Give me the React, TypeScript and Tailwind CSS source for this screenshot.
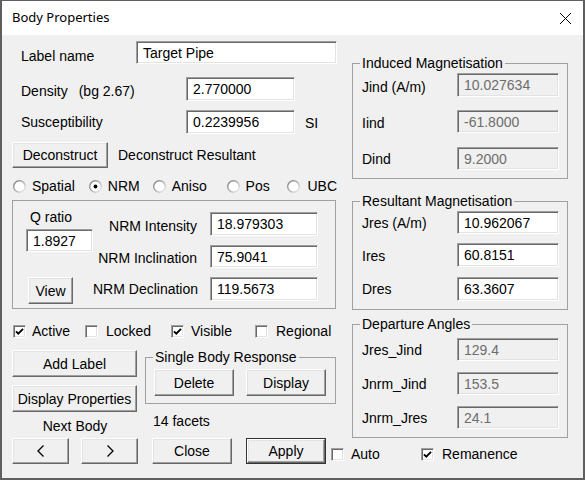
import React from "react"

const raised =
  "bg-[#f0f0f0] border border-t-white border-l-white border-r-[#696969] border-b-[#696969] shadow-[inset_-1px_-1px_0_#a0a0a0,inset_1px_1px_0_#e3e3e3]"

const sunken =
  "border border-t-[#a0a0a0] border-l-[#a0a0a0] border-r-white border-b-white shadow-[inset_1px_1px_0_#696969,inset_-1px_-1px_0_#e3e3e3]"

function Btn({ className = "", children }: { className?: string; children: React.ReactNode }) {
  return (
    <div className={`flex items-center justify-center shrink-0 leading-4 ${raised} ${className}`}>
      {children}
    </div>
  )
}

function Edit({
  className = "",
  value,
  disabled,
}: {
  className?: string
  value: string
  disabled?: boolean
}) {
  return (
    <div
      className={`flex items-center pl-[6px] shrink-0 leading-4 ${sunken} ${
        disabled ? "bg-[#f0f0f0] text-[#6d6d6d]" : "bg-white text-black"
      } ${className}`}
    >
      {value}
    </div>
  )
}

function Radio({ checked }: { checked?: boolean }) {
  return (
    <svg width="13" height="13" viewBox="0 0 13 13" className="shrink-0">
      <defs>
        <linearGradient id="rg" x1="0" y1="0" x2="1" y2="1">
          <stop offset="0" stopColor="#7a7a7a" />
          <stop offset="0.5" stopColor="#b0b0b0" />
          <stop offset="1" stopColor="#f4f4f4" />
        </linearGradient>
      </defs>
      <circle cx="6.5" cy="6.5" r="5.8" fill="#ffffff" stroke="url(#rg)" strokeWidth="1.4" />
      {checked && <circle cx="6.5" cy="6.5" r="1.9" fill="#000" />}
    </svg>
  )
}

function Check({ checked }: { checked?: boolean }) {
  return (
    <div className={`w-[13px] h-[13px] bg-white shrink-0 flex items-center justify-center ${sunken}`}>
      {checked && (
        <svg width="9" height="9" viewBox="0 0 9 9">
          <polyline points="1,4.3 3.3,6.7 8,1.8" fill="none" stroke="#000" strokeWidth="1.9" />
        </svg>
      )}
    </div>
  )
}

function Chevron({ right }: { right?: boolean }) {
  return (
    <svg width="8" height="12" viewBox="0 0 8 12">
      <polyline
        points={right ? "1.5,0.5 7,6 1.5,11.5" : "6.5,0.5 1,6 6.5,11.5"}
        fill="none"
        stroke="#000"
        strokeWidth="1.3"
      />
    </svg>
  )
}

function Group({
  title,
  className = "",
  children,
}: {
  title: string
  className?: string
  children: React.ReactNode
}) {
  return (
    <fieldset className={`border border-[#a0a0a0] shrink-0 ${className}`}>
      <legend className="ml-[7px] px-[2px] leading-4">{title}</legend>
      {children}
    </fieldset>
  )
}

function Row({
  label,
  value,
  rowTop,
  labelTop,
  h,
  disabled,
}: {
  label: string
  value: string
  rowTop: string
  labelTop: string
  h: string
  disabled?: boolean
}) {
  return (
    <div className={`flex ${rowTop}`}>
      <span className={`ml-[9px] w-[95px] leading-4 ${labelTop}`}>{label}</span>
      <Edit className={`w-[102px] ${h}`} value={value} disabled={disabled} />
    </div>
  )
}

export default function App() {
  return (
    <div className="w-[585px] h-[480px] bg-[#f0f0f0] border-x-2 border-b-2 border-t border-[#5f5f5f] flex flex-col text-[14px] text-black font-['Liberation_Sans',Arial,sans-serif]">
      {/* Title bar */}
      <div className="h-[34px] shrink-0 bg-white flex items-center justify-between pl-[10px] pr-[11px]">
        <span className="font-['Noto_Sans',sans-serif] text-[13px]">Body Properties</span>
        <svg width="13" height="13" viewBox="0 0 13 13">
          <path d="M1 1 L12 12 M12 1 L1 12" stroke="#000" strokeWidth="1" />
        </svg>
      </div>

      <div className="flex-1 pl-[10px] flex flex-col">
        <div className="h-[403px] flex">
          {/* Left column */}
          <div className="w-[325px] flex flex-col">
            <div className="flex mt-[6px]">
              <span className="ml-[9px] w-[115px] mt-[7px] leading-4">Label name</span>
              <Edit className="w-[201px] h-[23px]" value="Target Pipe" />
            </div>
            <div className="flex mt-[13px]">
              <span className="ml-[9px] w-[165px] mt-[6px] leading-4">
                Density<span className="ml-[11px]">(bg 2.67)</span>
              </span>
              <Edit className="w-[109px] h-[24px]" value="2.770000" />
            </div>
            <div className="flex mt-[9px]">
              <span className="ml-[9px] w-[165px] mt-[4px] leading-4">Susceptibility</span>
              <Edit className="w-[109px] h-[24px]" value="0.2239956" />
              <span className="ml-[10px] mt-[5px] leading-4">SI</span>
            </div>
            <div className="flex mt-[8px]">
              <Btn className="w-[96px] h-[26px]">Deconstruct</Btn>
              <span className="ml-[10px] mt-[5px] leading-4">Deconstruct Resultant</span>
            </div>

            {/* Mode radios */}
            <div className="flex h-[16px] items-center mt-[10px] leading-4">
              <div className="ml-[1px] w-[76px] flex items-center gap-[6px]">
                <Radio />
                <span>Spatial</span>
              </div>
              <div className="w-[64px] flex items-center gap-[6px]">
                <Radio checked />
                <span>NRM</span>
              </div>
              <div className="w-[74px] flex items-center gap-[6px]">
                <Radio />
                <span>Aniso</span>
              </div>
              <div className="w-[61px] flex items-center gap-[6px]">
                <Radio />
                <span>Pos</span>
              </div>
              <div className="flex items-center gap-[7px]">
                <Radio />
                <span>UBC</span>
              </div>
            </div>

            {/* NRM group */}
            <div className="mt-[6px] w-[324px] h-[109px] border border-[#a0a0a0] flex shrink-0">
              <div className="ml-[13px] w-[67px] flex flex-col items-start">
                <span className="ml-[4px] mt-[8px] leading-4">Q ratio</span>
                <Edit className="mt-[4px] w-[67px] h-[23px]" value="1.8927" />
                <Btn className="mt-[25px] ml-[2px] w-[45px] h-[27px]">View</Btn>
              </div>
              <div className="flex flex-col">
                <div className="flex mt-[11px]">
                  <span className="w-[104px] text-right whitespace-nowrap mt-[6px] leading-4">NRM Intensity</span>
                  <Edit className="ml-[13px] w-[108px] h-[24px]" value="18.979303" />
                </div>
                <div className="flex mt-[9px]">
                  <span className="w-[104px] text-right whitespace-nowrap mt-[5px] leading-4">NRM Inclination</span>
                  <Edit className="ml-[13px] w-[108px] h-[23px]" value="75.9041" />
                </div>
                <div className="flex mt-[9px]">
                  <span className="w-[104px] text-right whitespace-nowrap mt-[4px] leading-4">NRM Declination</span>
                  <Edit className="ml-[13px] w-[108px] h-[24px]" value="119.5673" />
                </div>
              </div>
            </div>

            {/* Flags */}
            <div className="flex h-[16px] items-center mt-[14px] leading-4">
              <div className="ml-[1px] w-[72px] flex items-center gap-[6px]">
                <Check checked />
                <span>Active</span>
              </div>
              <div className="w-[86px] flex items-center gap-[8px]">
                <Check />
                <span>Locked</span>
              </div>
              <div className="w-[84px] flex items-center gap-[7px]">
                <Check checked />
                <span>Visible</span>
              </div>
              <div className="flex items-center gap-[8px]">
                <Check />
                <span>Regional</span>
              </div>
            </div>

            <div className="flex">
              <div className="w-[126px] flex flex-col">
                <Btn className="mt-[11px] w-[125px] h-[27px]">Add Label</Btn>
                <Btn className="mt-[8px] w-[125px] h-[27px]">Display Properties</Btn>
                <span className="mt-[6px] leading-4 text-center">Next Body</span>
              </div>
              <div className="ml-[7px] flex flex-col">
                <Group title="Single Body Response" className="mt-[10px] w-[191px] h-[55px]">
                  <div className="flex mt-[4px]">
                    <Btn className="ml-[8px] w-[80px] h-[27px]">Delete</Btn>
                    <Btn className="ml-[12px] w-[80px] h-[27px]">Display</Btn>
                  </div>
                </Group>
                <span className="mt-[9px] ml-[8px] leading-4">14 facets</span>
              </div>
            </div>
          </div>

          {/* Right column */}
          <div className="ml-[15px] w-[216px] flex flex-col">
            <Group title="Induced Magnetisation" className="mt-[20px] w-[216px] h-[124px]">
              <Row label="Jind (A/m)" value="10.027634" rowTop="mt-[2px]" labelTop="mt-[6px]" h="h-[24px]" disabled />
              <Row label="Iind" value="-61.8000" rowTop="mt-[13px]" labelTop="mt-[5px]" h="h-[23px]" disabled />
              <Row label="Dind" value="9.2000" rowTop="mt-[14px]" labelTop="mt-[4px]" h="h-[23px]" disabled />
            </Group>
            <Group title="Resultant Magnetisation" className="mt-[14px] w-[216px] h-[117px]">
              <Row label="Jres (A/m)" value="10.962067" rowTop="mt-[2px]" labelTop="mt-[4px]" h="h-[23px]" />
              <Row label="Ires" value="60.8151" rowTop="mt-[9px]" labelTop="mt-[5px]" h="h-[24px]" />
              <Row label="Dres" value="63.3607" rowTop="mt-[10px]" labelTop="mt-[4px]" h="h-[24px]" />
            </Group>
            <Group title="Departure Angles" className="mt-[6px] w-[216px] h-[122px]">
              <Row label="Jres_Jind" value="129.4" rowTop="mt-[6px]" labelTop="mt-[4px]" h="h-[23px]" disabled />
              <Row label="Jnrm_Jind" value="153.5" rowTop="mt-[11px]" labelTop="mt-[4px]" h="h-[23px]" disabled />
              <Row label="Jnrm_Jres" value="24.1" rowTop="mt-[11px]" labelTop="mt-[4px]" h="h-[23px]" disabled />
            </Group>
          </div>
        </div>

        {/* Bottom buttons */}
        <div className="flex items-start">
          <Btn className="w-[57px] h-[26px]">
            <Chevron />
          </Btn>
          <Btn className="ml-[12px] w-[57px] h-[26px]">
            <Chevron right />
          </Btn>
          <Btn className="ml-[14px] w-[80px] h-[26px]">Close</Btn>
          <div className="ml-[14px] w-[80px] h-[26px] border border-[#333333] flex shrink-0">
            <Btn className="w-full h-full">Apply</Btn>
          </div>
          <div className="ml-[5px] mt-[8px] w-[90px] h-[16px] flex items-center gap-[7px] leading-4">
            <Check />
            <span>Auto</span>
          </div>
          <div className="mt-[8px] h-[16px] flex items-center gap-[8px] leading-4">
            <Check checked />
            <span>Remanence</span>
          </div>
        </div>
      </div>
    </div>
  )
}
